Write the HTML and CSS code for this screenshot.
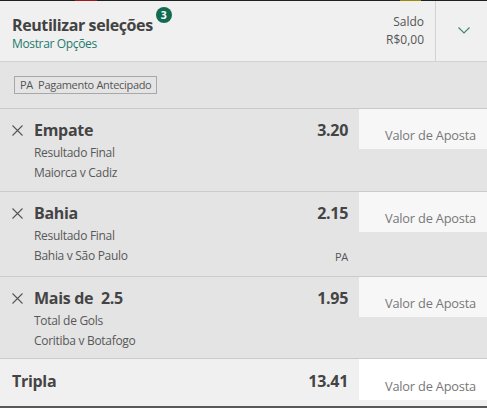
FILE: index.html
```html
<!DOCTYPE html>
<html lang="pt-BR">
<head>
<meta charset="utf-8">
<title>Cupom</title>
<link rel="stylesheet" href="styles.css">
</head>
<body>
<div class="slip">
  <div class="strip">
    <span class="strip-gap g1"></span><span class="strip-red"></span><span class="strip-gap g2"></span><span class="strip-yellow"></span>
  </div>
  <header class="head">
    <div class="head-main">
      <div class="head-title">
        <span class="title">Reutilizar seleções</span>
        <span class="badge">3</span>
      </div>
      <div class="opts">Mostrar Opções</div>
    </div>
    <div class="saldo">
      <div>Saldo</div>
      <div>R$0,00</div>
    </div>
    <div class="toggle">
      <svg width="12" height="7" viewBox="0 0 12 7"><path d="M0.5 0.5 L6 6 L11.5 0.5" fill="none" stroke="#3f8a7c" stroke-width="1.2"/></svg>
    </div>
  </header>
  <div class="tags">
    <span class="tag">PA&nbsp; Pagamento Antecipado</span>
  </div>
  <div class="row">
    <div class="row-info">
      <div class="row-top">
        <svg class="x" width="11" height="11" viewBox="0 0 11 11"><path d="M0.5 0.5 L10.5 10.5 M10.5 0.5 L0.5 10.5" stroke="#555" stroke-width="1.1"/></svg>
        <span class="name">Empate</span>
        <span class="odds">3.20</span>
      </div>
      <div class="sub">Resultado Final</div>
      <div class="sub">Maiorca v Cadiz</div>
    </div>
    <div class="stake">Valor de Aposta</div>
  </div>
  <div class="row row-tall">
    <div class="row-info">
      <div class="row-top">
        <svg class="x" width="11" height="11" viewBox="0 0 11 11"><path d="M0.5 0.5 L10.5 10.5 M10.5 0.5 L0.5 10.5" stroke="#555" stroke-width="1.1"/></svg>
        <span class="name">Bahia</span>
        <span class="odds">2.15</span>
      </div>
      <div class="sub">Resultado Final</div>
      <div class="sub sub-pa"><span>Bahia v São Paulo</span><span class="pa">PA</span></div>
    </div>
    <div class="stake">Valor de Aposta</div>
  </div>
  <div class="row row-short">
    <div class="row-info">
      <div class="row-top">
        <svg class="x" width="11" height="11" viewBox="0 0 11 11"><path d="M0.5 0.5 L10.5 10.5 M10.5 0.5 L0.5 10.5" stroke="#555" stroke-width="1.1"/></svg>
        <span class="name">Mais de&nbsp; 2.5</span>
        <span class="odds">1.95</span>
      </div>
      <div class="sub">Total de Gols</div>
      <div class="sub">Coritiba v Botafogo</div>
    </div>
    <div class="stake">Valor de Aposta</div>
  </div>
  <div class="total">
    <div class="total-info">
      <span class="name total-name">Tripla</span>
      <span class="odds">13.41</span>
    </div>
    <div class="stake stake-white">Valor de Aposta</div>
  </div>
</div>
</body>
</html>
```

FILE: styles.css
```css
* { box-sizing: border-box; }
html, body { margin: 0; padding: 0; background: #f0f0f0; }
body {
  font-family: "Open Sans", "Noto Sans", sans-serif;
  color: #444;
  width: 487px;
  height: 408px;
  overflow: hidden;
}
.slip { width: 487px; }

.strip { height: 1px; background: #1c2121; display: flex; }
.strip-gap.g1 { width: 75px; }
.strip-red { width: 22px; background: #9e1b1b; }
.strip-gap.g2 { width: 303px; }
.strip-yellow { width: 21px; background: #9c8a0a; }

.head {
  height: 61px;
  display: flex;
  background: #f0f0f0;
  border-bottom: 1px solid #d2d2d2;
}
.head-main { flex: 1; padding: 6px 0 0 12px; }
.head-title { display: flex; align-items: flex-start; }
.title {
  font-size: 16px;
  font-weight: 700;
  color: #424242;
  line-height: 22px;
  margin-top: 7px;
  letter-spacing: -0.4px;
}
.badge {
  width: 16px;
  height: 16px;
  border-radius: 50%;
  background: #126b50;
  color: #fff;
  font-size: 10.5px;
  font-weight: 700;
  line-height: 16px;
  text-align: center;
  margin-left: 3px;
}
.opts {
  font-size: 12px;
  color: #247a6d;
  line-height: 16px;
  letter-spacing: -0.35px;
}
.saldo {
  padding: 12px 11px 0 0;
  text-align: right;
  font-size: 12px;
  line-height: 17.5px;
  color: #555;
}
.toggle {
  width: 52px;
  border-left: 1px solid #d2d2d2;
  display: flex;
  justify-content: center;
  padding-top: 26px;
  padding-left: 5px;
}

.tags {
  height: 47px;
  background: #e4e4e4;
  padding: 14px 0 0 14px;
  border-bottom: 1px solid #c9c9c9;
  display: flex;
  align-items: flex-start;
}
.tag {
  height: 18px;
  border: 1px solid #a8a8a8;
  padding: 0 5px 0 5px;
  font-size: 11px;
  line-height: 16px;
  color: #555;
  letter-spacing: -0.3px;
}

.row {
  display: flex;
  background: #e4e4e4;
  border-bottom: 1px solid #cbcbcb;
  height: 83px;
}
.row-tall { height: 85px; }
.row-short { height: 82px; }
.row-info { flex: 1; padding: 10px 11px 0 12px; }
.row-top { display: flex; align-items: center; height: 22px; }
.x { margin-right: 11px; flex: none; }
.name {
  font-size: 16px;
  font-weight: 700;
  color: #444;
  letter-spacing: -0.3px;
  flex: 1;
}
.odds {
  font-size: 16px;
  font-weight: 700;
  color: #444;
  letter-spacing: -0.3px;
}
.sub {
  font-size: 12px;
  color: #585858;
  line-height: 19.5px;
  padding-left: 22px;
  letter-spacing: -0.3px;
}
.sub:nth-child(2) { margin-top: 2px; }
.sub-pa { display: flex; justify-content: space-between; }
.pa { font-size: 11px; color: #555; padding-top: 1px; }

.stake {
  width: 128px;
  height: 40px;
  background: #f7f7f7;
  color: #777;
  font-size: 12.8px;
  padding: 16px 0 0 26px;
  line-height: 20px;
  flex: none;
  letter-spacing: -0.2px;
}
.stake-white { background: #fff; height: 41px; padding-top: 17px; }

.total {
  display: flex;
  height: 49px;
  background: #f0f0f0;
  border-bottom: 2px solid #595959;
}
.total-info {
  flex: 1;
  display: flex;
  align-items: center;
  padding: 0 11px 3px 12px;
  height: 47px;
}
.total-name { flex: 1; }
```
